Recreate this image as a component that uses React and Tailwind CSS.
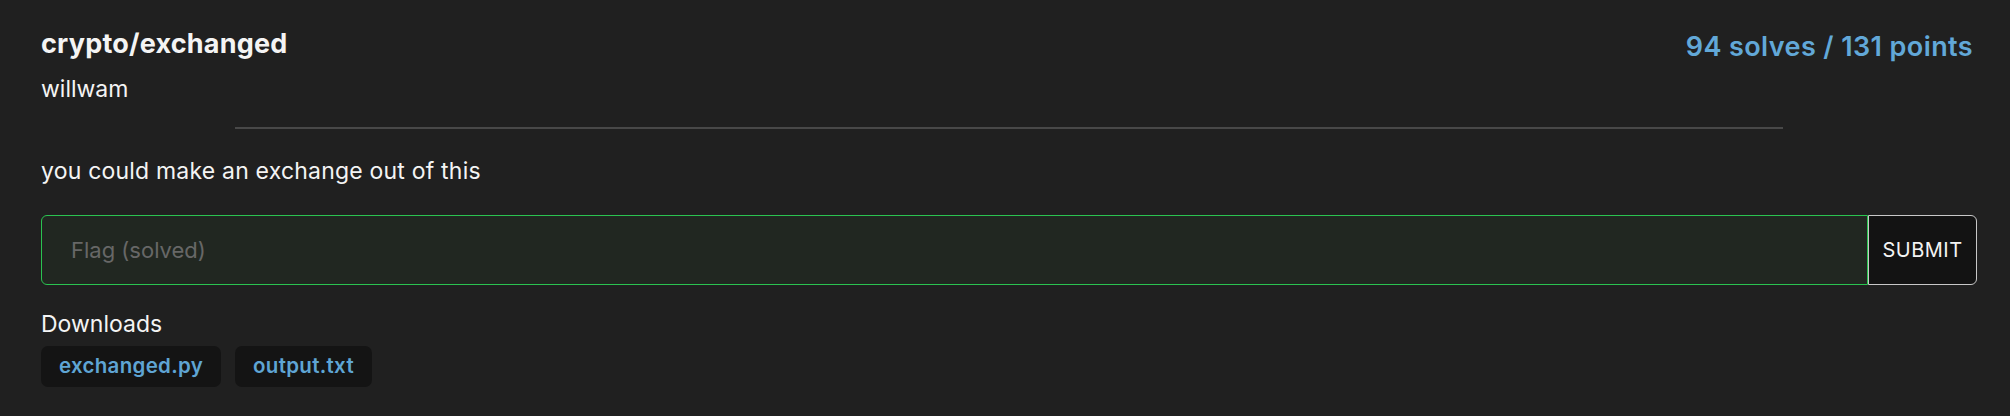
export default function App() {
  const files = ['exchanged.py', 'output.txt'];

  return (
    <div className="min-h-screen bg-[#202020] pl-[41px] pr-[33px] pt-[28px] font-['Inter',sans-serif] text-[#f4f4f4]">
      <div className="flex items-start justify-between">
        <div>
          <h1 className="text-[27px] font-bold leading-[32px] tracking-[0.2px]">crypto/exchanged</h1>
          <p className="mt-[15px] text-[23px] leading-[28px]">willwam</p>
        </div>
        <div className="mr-[4px] mt-[3px] text-[27px] font-semibold leading-[32px] tracking-[0.4px] text-[#62a8d8]">
          94 solves / 131 points
        </div>
      </div>

      <div className="mx-auto mt-[24px] h-[2px] w-4/5 bg-[#484848]" />

      <p className="mt-[28px] text-[23px] leading-[28px] tracking-[0.2px]">you could make an exchange out of this</p>

      <form className="mt-[30px] flex h-[70px]" onSubmit={(e) => e.preventDefault()}>
        <input
          className="h-full flex-1 rounded-l-[6px] border border-[#2ac350] bg-[#212721] px-[29px] text-[22px] text-[#f4f4f4] outline-none placeholder:text-[#676767]"
          placeholder="Flag (solved)"
        />
        <button className="h-full w-[109px] rounded-r-[6px] border border-[#c8c8c8] bg-[#131313] text-[20px] tracking-[0.5px] text-[#f4f4f4]">
          SUBMIT
        </button>
      </form>

      <p className="mt-[25px] text-[23px] leading-[28px]">Downloads</p>
      <div className="mt-[8px] flex gap-[14px]">
        {files.map((f) => (
          <a
            key={f}
            href="#"
            className="flex h-[41px] items-center rounded-[7px] bg-[#141414] px-[18px] text-[20.5px] font-semibold tracking-[0.3px] text-[#5fa5d4]"
          >
            {f}
          </a>
        ))}
      </div>
    </div>
  );
}
